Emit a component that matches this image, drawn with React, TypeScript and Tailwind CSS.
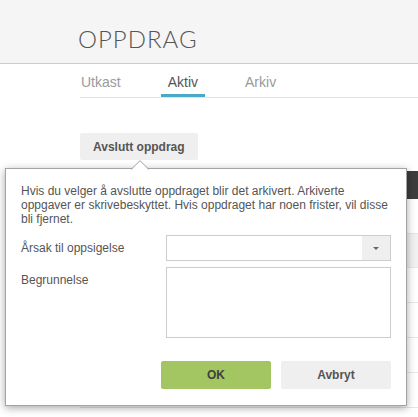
import React from "react";

export default function App() {
  const rows = [0, 1, 2, 3, 4, 5];
  return (
    <div className="relative h-[417px] w-[418px] overflow-hidden bg-white font-['Liberation_Sans',Arial,sans-serif] text-[#555]">
      <header className="h-[64px] border-b border-[#cccccc] bg-[#f5f5f5] pl-[78px] pt-[25px]">
        <h1 className="font-['Lato',sans-serif] text-[24px] font-light leading-[28px] tracking-[1px] text-[#555]">
          OPPDRAG
        </h1>
      </header>

      <div className="pl-[80px]">
        <nav className="flex gap-[33px] border-b border-[#e3e3e3] text-[14px] leading-[16px]">
          <div className="border-b-[3px] border-transparent pb-[4px] pl-[1px] pr-[7px] pt-[10px] text-[#9a9a9a]">
            Utkast
          </div>
          <div className="border-b-[3px] border-[#4aa8c8] px-[7px] pb-[4px] pt-[10px] text-[#555]">
            Aktiv
          </div>
          <div className="border-b-[3px] border-transparent px-[7px] pb-[4px] pt-[10px] text-[#9a9a9a]">
            Arkiv
          </div>
        </nav>

        <div className="mt-[35px] flex">
          <button className="flex h-[27px] items-center rounded-[2px] bg-[#efefef] px-[13px] text-[12px] font-bold text-[#555]">
            Avslutt oppdrag
          </button>
        </div>

        <div className="mt-[11px] w-[420px]">
          <div className="h-[28px] bg-[#3d3d3d]" />
          {rows.map((r) => (
            <div
              key={r}
              className={
                r === 1
                  ? "h-[34px] border-b border-[#e6e6e6] bg-[#f1f1f1]"
                  : "h-[35px] border-b border-[#e6e6e6] bg-white"
              }
            />
          ))}
        </div>
      </div>

      <div className="absolute left-[5px] top-[168px] h-[238px] w-[402px] border border-[#a3a3a3] bg-white px-[15px] pt-[15px] shadow-[0_2px_8px_rgba(0,0,0,0.35)]">
        <svg
          className="absolute left-[125px] top-[-9px]"
          width="18"
          height="10"
          viewBox="0 0 18 10"
        >
          <polygon points="0,10 9,1 18,10" fill="#ffffff" />
          <polyline points="0,9.5 9,0.7 18,9.5" fill="none" stroke="#a3a3a3" strokeWidth="1" />
        </svg>

        <p className="text-[12px] leading-[14px] text-[#555]">
          Hvis du velger å avslutte oppdraget blir det arkivert. Arkiverte oppgaver er skrivebeskyttet. Hvis oppdraget har noen frister, vil disse bli fjernet.
        </p>

        <div className="mt-[9px] flex flex-col gap-[6px] text-[12px]">
          <div className="flex">
            <label className="w-[145px] pt-[5px] leading-[16px]">Årsak til oppsigelse</label>
            <div className="flex h-[26px] flex-1 border border-[#cccccc] bg-white">
              <div className="flex-1" />
              <div className="flex w-[28px] items-center justify-center bg-[#efefef]">
                <svg width="6" height="3" viewBox="0 0 6 3">
                  <polygon points="0,0 6,0 3,3" fill="#666666" />
                </svg>
              </div>
            </div>
          </div>
          <div className="flex">
            <label className="w-[145px] pt-[5px] leading-[16px]">Begrunnelse</label>
            <textarea className="h-[71px] flex-1 resize-none border border-[#cccccc] bg-white outline-none" />
          </div>
        </div>

        <div className="mt-[23px] flex justify-end gap-[10px]">
          <button className="flex h-[28px] w-[110px] items-center justify-center rounded-[2px] bg-[#a3c662] text-[12px] font-bold text-[#3f3f3f]">
            OK
          </button>
          <button className="flex h-[28px] w-[110px] items-center justify-center rounded-[2px] bg-[#efefef] text-[12px] font-bold text-[#555]">
            Avbryt
          </button>
        </div>
      </div>
    </div>
  );
}
